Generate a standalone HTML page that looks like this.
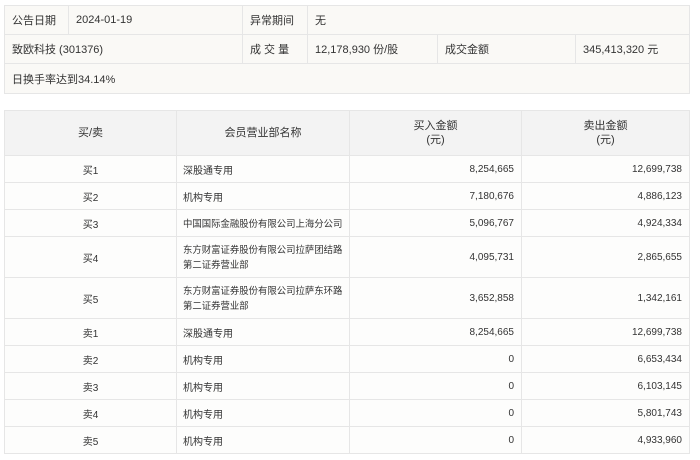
<!DOCTYPE html>
<html><head><meta charset="utf-8"><style>
body{margin:0;width:700px;height:460px;background:#fff;font-family:"Liberation Sans","Noto Sans CJK SC",sans-serif;font-size:10px;color:#333;position:relative;overflow:hidden}
.c{position:absolute;box-sizing:border-box;display:flex;align-items:center;border:1px solid #e6e6e6;margin:0;white-space:nowrap}
.t{background:#faf9f6;font-size:11px}
.h{background:#f3f3f3;justify-content:center;text-align:center;line-height:14px;font-size:11px}
.b{background:#fdfdfc}
.l{padding-left:6px}.r{justify-content:flex-end;padding-right:7px}.m{justify-content:center}
.t.l{padding-left:7px}
.s{font-size:9.4px}
</style></head><body>
<div class="c t l" style="left:4px;top:5px;width:65px;height:30px">公告日期</div>
<div class="c t l" style="left:68px;top:5px;width:175px;height:30px">2024-01-19</div>
<div class="c t l" style="left:242px;top:5px;width:66px;height:30px">异常期间</div>
<div class="c t l" style="left:307px;top:5px;width:383px;height:30px">无</div>
<div class="c t l" style="left:4px;top:34px;width:239px;height:30px">致欧科技 (301376)</div>
<div class="c t l" style="left:242px;top:34px;width:66px;height:30px">成 交 量</div>
<div class="c t l" style="left:307px;top:34px;width:131px;height:30px">12,178,930 份/股</div>
<div class="c t l" style="left:437px;top:34px;width:139px;height:30px">成交金额</div>
<div class="c t l" style="left:575px;top:34px;width:115px;height:30px">345,413,320 元</div>
<div class="c t l" style="left:4px;top:63px;width:686px;height:31px">日换手率达到34.14%</div>

<div class="c h" style="left:4px;top:110px;width:173px;height:46px">买/卖</div>
<div class="c h" style="left:176px;top:110px;width:174px;height:46px">会员营业部名称</div>
<div class="c h" style="left:349px;top:110px;width:173px;height:46px">买入金额<br>(元)</div>
<div class="c h" style="left:521px;top:110px;width:169px;height:46px">卖出金额<br>(元)</div>
<div class="c b m" style="left:4px;top:155px;width:173px;height:28px">买1</div><div class="c b l" style="left:176px;top:155px;width:174px;height:28px">深股通专用</div><div class="c b r" style="left:349px;top:155px;width:173px;height:28px">8,254,665</div><div class="c b r" style="left:521px;top:155px;width:169px;height:28px">12,699,738</div>
<div class="c b m" style="left:4px;top:182px;width:173px;height:28px">买2</div><div class="c b l" style="left:176px;top:182px;width:174px;height:28px">机构专用</div><div class="c b r" style="left:349px;top:182px;width:173px;height:28px">7,180,676</div><div class="c b r" style="left:521px;top:182px;width:169px;height:28px">4,886,123</div>
<div class="c b m" style="left:4px;top:209px;width:173px;height:28px">买3</div><div class="c b l s" style="left:176px;top:209px;width:174px;height:28px">中国国际金融股份有限公司上海分公司</div><div class="c b r" style="left:349px;top:209px;width:173px;height:28px">5,096,767</div><div class="c b r" style="left:521px;top:209px;width:169px;height:28px">4,924,334</div>
<div class="c b m" style="left:4px;top:236px;width:173px;height:42px">买4</div><div class="c b l s" style="left:176px;top:236px;width:174px;height:42px;line-height:15px">东方财富证券股份有限公司拉萨团结路<br>第二证券营业部</div><div class="c b r" style="left:349px;top:236px;width:173px;height:42px">4,095,731</div><div class="c b r" style="left:521px;top:236px;width:169px;height:42px">2,865,655</div>
<div class="c b m" style="left:4px;top:277px;width:173px;height:42px">买5</div><div class="c b l s" style="left:176px;top:277px;width:174px;height:42px;line-height:15px">东方财富证券股份有限公司拉萨东环路<br>第二证券营业部</div><div class="c b r" style="left:349px;top:277px;width:173px;height:42px">3,652,858</div><div class="c b r" style="left:521px;top:277px;width:169px;height:42px">1,342,161</div>
<div class="c b m" style="left:4px;top:318px;width:173px;height:28px">卖1</div><div class="c b l" style="left:176px;top:318px;width:174px;height:28px">深股通专用</div><div class="c b r" style="left:349px;top:318px;width:173px;height:28px">8,254,665</div><div class="c b r" style="left:521px;top:318px;width:169px;height:28px">12,699,738</div>
<div class="c b m" style="left:4px;top:345px;width:173px;height:28px">卖2</div><div class="c b l" style="left:176px;top:345px;width:174px;height:28px">机构专用</div><div class="c b r" style="left:349px;top:345px;width:173px;height:28px">0</div><div class="c b r" style="left:521px;top:345px;width:169px;height:28px">6,653,434</div>
<div class="c b m" style="left:4px;top:372px;width:173px;height:28px">卖3</div><div class="c b l" style="left:176px;top:372px;width:174px;height:28px">机构专用</div><div class="c b r" style="left:349px;top:372px;width:173px;height:28px">0</div><div class="c b r" style="left:521px;top:372px;width:169px;height:28px">6,103,145</div>
<div class="c b m" style="left:4px;top:399px;width:173px;height:28px">卖4</div><div class="c b l" style="left:176px;top:399px;width:174px;height:28px">机构专用</div><div class="c b r" style="left:349px;top:399px;width:173px;height:28px">0</div><div class="c b r" style="left:521px;top:399px;width:169px;height:28px">5,801,743</div>
<div class="c b m" style="left:4px;top:426px;width:173px;height:28px">卖5</div><div class="c b l" style="left:176px;top:426px;width:174px;height:28px">机构专用</div><div class="c b r" style="left:349px;top:426px;width:173px;height:28px">0</div><div class="c b r" style="left:521px;top:426px;width:169px;height:28px">4,933,960</div>
</body></html>
